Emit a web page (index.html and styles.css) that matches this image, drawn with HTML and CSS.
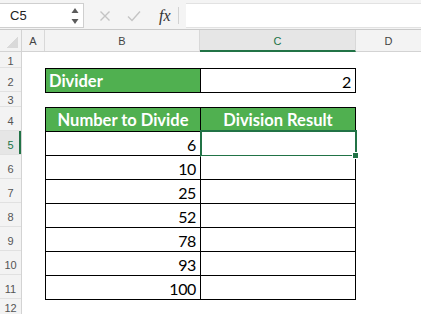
FILE: index.html
```html
<!DOCTYPE html>
<html lang="en">
<head>
  <meta charset="UTF-8" />
  <meta name="viewport" content="width=device-width, initial-scale=1.0" />
  <title>Divide numbers</title>
  <link rel="stylesheet" href="styles.css">
</head>
<body>
  <div class="app">
    <div class="formula-bar">
      <div class="name-box">
        <span class="cell-ref">C5</span>
        <svg class="spin" width="8" height="18" viewBox="0 0 8 18">
          <path d="M4 1 L7.5 6 L0.5 6 Z" fill="#5b5b5b" />
          <path d="M4 17 L7.5 12 L0.5 12 Z" fill="#5b5b5b" />
        </svg>
      </div>
      <div class="actions">
        <svg class="icon" width="12" height="12" viewBox="0 0 12 12">
          <path d="M1.5 1.5 L10.5 10.5 M10.5 1.5 L1.5 10.5" stroke="#c4c4c4" stroke-width="1.4" fill="none" />
        </svg>
        <svg class="icon" width="14" height="12" viewBox="0 0 14 12">
          <path d="M1 6.5 L5 10.5 L13 1.5" stroke="#c4c4c4" stroke-width="1.4" fill="none" />
        </svg>
        <span class="fx">fx</span>
        <span class="sep"></span>
      </div>
      <div class="formula-input"></div>
    </div>

    <div class="col-heads">
      <div class="corner"></div>
      <div class="col-head col-a">A</div>
      <div class="col-head col-b">B</div>
      <div class="col-head col-c active">C</div>
      <div class="col-head col-d">D</div>
    </div>

    <div class="sheet">
      <div class="row-heads">
        <div class="row-head short">1</div>
        <div class="row-head">2</div>
        <div class="row-head short3">3</div>
        <div class="row-head">4</div>
        <div class="row-head active">5</div>
        <div class="row-head">6</div>
        <div class="row-head">7</div>
        <div class="row-head">8</div>
        <div class="row-head">9</div>
        <div class="row-head">10</div>
        <div class="row-head">11</div>
        <div class="row-head last">12</div>
      </div>

      <div class="cells">
        <div class="table divider-table">
          <div class="cell head left">Divider</div>
          <div class="cell num">2</div>
        </div>

        <div class="table main-table">
          <div class="cell head">Number to Divide</div>
          <div class="cell head">Division Result</div>

          <div class="cell num">6</div>
          <div class="cell selected"><span class="handle"></span></div>
          <div class="cell num">10</div>
          <div class="cell"></div>
          <div class="cell num">25</div>
          <div class="cell"></div>
          <div class="cell num">52</div>
          <div class="cell"></div>
          <div class="cell num">78</div>
          <div class="cell"></div>
          <div class="cell num">93</div>
          <div class="cell"></div>
          <div class="cell num">100</div>
          <div class="cell"></div>
        </div>
      </div>
    </div>
  </div>
</body>
</html>
```

FILE: styles.css
```css
body {
  margin: 0;
  background: #ffffff;
  font-family: 'Liberation Sans', Arial, sans-serif;
  overflow: hidden;
}

.app {
  width: 421px;
  height: 315px;
  overflow: hidden;
}

/* formula bar */
.formula-bar {
  height: 30px;
  display: flex;
  align-items: stretch;
  background: #f4f4f4;
  border-bottom: 1px solid #c9c9c9;
  box-sizing: border-box;
  padding: 3px 0 1px;
}

.name-box {
  width: 84px;
  background: #ffffff;
  border: 1px solid #cfcfcf;
  border-left: none;
  display: flex;
  align-items: center;
  justify-content: space-between;
  padding: 0 4px 0 10px;
  box-sizing: border-box;
}

.cell-ref {
  font-size: 13px;
  color: #222;
}

.actions {
  width: 102px;
  display: flex;
  align-items: center;
  padding-left: 15px;
  box-sizing: border-box;
}

.actions .icon {
  margin-right: 16px;
}

.actions .icon + .icon {
  margin-right: 18px;
}

.fx {
  font-family: 'Liberation Serif', 'Times New Roman', serif;
  font-style: italic;
  font-size: 16px;
  color: #333;
  margin-right: 7px;
}

.sep {
  width: 1px;
  height: 17px;
  background: #d2d2d2;
}

.formula-input {
  flex: 1;
  background: #ffffff;
  border-top: 1px solid #e2e2e2;
  border-bottom: 1px solid #e2e2e2;
}

/* column headers */
.col-heads {
  display: flex;
  height: 22px;
  background: #f3f3f3;
  border-bottom: 1px solid #d3d3d3;
  box-sizing: border-box;
}

.corner {
  width: 22px;
  border-right: 1px solid #d3d3d3;
  box-sizing: border-box;
  background: linear-gradient(135deg, transparent 55%, #d9d9d9 55%) no-repeat right 3px bottom 3px / 13px 13px;
}

.col-head {
  display: flex;
  align-items: center;
  justify-content: center;
  font-size: 11px;
  color: #444;
  border-right: 1px solid #d8d8d8;
  box-sizing: border-box;
}

.col-a { width: 23px; }
.col-b { width: 155px; }
.col-c { width: 156px; }
.col-d { flex: 1; border-right: none; }

.col-head.active {
  background: #e6e6e6;
  color: #217346;
  border-bottom: 2px solid #217346;
  margin-bottom: -1px;
  padding-top: 1px;
}

/* sheet */
.sheet {
  display: flex;
}

.row-heads {
  width: 22px;
  background: #f3f3f3;
  border-right: 1px solid #d3d3d3;
  box-sizing: border-box;
}

.row-head {
  height: 24px;
  display: flex;
  align-items: center;
  justify-content: center;
  padding-top: 4px;
  font-size: 11px;
  color: #555;
  border-bottom: 1px solid #e1e1e1;
  box-sizing: border-box;
}

.row-head.short { height: 16px; padding-top: 3px; }
.row-head.short3 { height: 15px; padding-top: 2px; }

.row-head.last {
  height: 15px;
  padding-top: 3px;
  border-bottom: none;
}

.row-head.active {
  background: #e6e6e6;
  color: #217346;
  box-shadow: inset -2px 0 0 #217346;
}

.cells {
  padding: 16px 0 0 23px;
}

.table {
  display: grid;
  grid-template-columns: 154px 154px;
  gap: 1px;
  padding: 1px;
  background: #000000;
  width: 311px;
  box-sizing: border-box;
}

.main-table {
  margin-top: 14px;
  grid-auto-rows: 23px;
}

.divider-table {
  grid-auto-rows: 23px;
}

.cell {
  background: #ffffff;
  font-family: Lato, 'Open Sans', sans-serif;
  font-size: 16px;
  letter-spacing: -0.4px;
  color: #000;
  display: flex;
  align-items: center;
  padding: 1px 4px 0;
  position: relative;
}

.cell.num {
  justify-content: flex-end;
}

.cell.head {
  background: #50b050;
  color: #ffffff;
  font-weight: 700;
  font-size: 16.5px;
  letter-spacing: 0;
  justify-content: center;
}

.cell.head.left {
  justify-content: flex-start;
  padding-left: 3px;
}

.cell.selected::after {
  content: "";
  position: absolute;
  top: -2px;
  left: -1px;
  right: -2px;
  bottom: -2px;
  border: 2px solid #217346;
}

.handle {
  position: absolute;
  right: -4px;
  bottom: -4px;
  width: 5px;
  height: 5px;
  background: #217346;
  border: 1px solid #ffffff;
  z-index: 2;
}
```
